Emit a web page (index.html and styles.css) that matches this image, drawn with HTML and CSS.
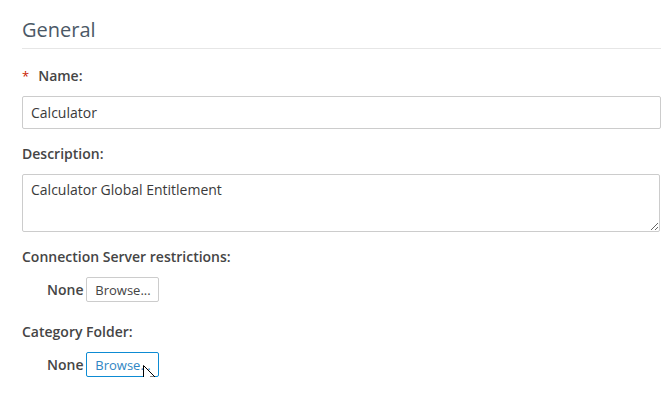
FILE: index.html
```html
<!DOCTYPE html>
<html>
<head>
<meta charset="utf-8">
<link rel="stylesheet" href="styles.css">
</head>
<body>
<div class="page">
  <h2 class="section-title">General</h2>
  <div class="group first">
    <div class="label"><span class="req">*</span>Name:</div>
    <input class="text-input" type="text" value="Calculator">
  </div>
  <div class="group">
    <div class="label">Description:</div>
    <textarea class="text-area">Calculator Global Entitlement</textarea>
  </div>
  <div class="group">
    <div class="label">Connection Server restrictions:</div>
    <div class="browse-row">
      <span class="none">None</span>
      <button class="btn">Browse...</button>
    </div>
  </div>
  <div class="group after-row">
    <div class="label">Category Folder:</div>
    <div class="browse-row">
      <span class="none">None</span>
      <span class="btn-wrap">
        <button class="btn focused">Browse...</button>
        <svg class="cursor" width="14" height="21" viewBox="0 0 14 21">
          <path d="M0.5 0.5 L0.5 16.5 L4.3 12.8 L7 19.5 L9.6 18.4 L7 12 L12 12 Z" fill="#fff" stroke="#000" stroke-width="1" stroke-linejoin="miter"/>
        </svg>
      </span>
    </div>
  </div>
</div>
</body>
</html>
```
FILE: styles.css
```css
* { box-sizing: border-box; }
html, body { margin: 0; padding: 0; background: #fff; }
body {
  font-family: "Open Sans", "Noto Sans", sans-serif;
  font-size: 14px;
  color: #3a3a3a;
}
.page {
  width: 661px;
  padding: 16px 0 0 22px;
  display: flex;
  flex-direction: column;
}
.section-title {
  margin: 0;
  font-size: 20px;
  line-height: 28px;
  font-weight: 400;
  color: #4b5866;
  padding-bottom: 4px;
  border-bottom: 1px solid #e6e6e6;
}
.group { display: flex; flex-direction: column; margin-top: 16px; }
.group.first { margin-top: 18px; }
.group.after-row { margin-top: 21px; }
.label {
  font-weight: 600;
  line-height: 18px;
  margin-bottom: 11px;
  color: #454545;
}
.req { color: #c92100; font-weight: 400; margin-right: 9px; font-size: 13px; }
.text-input {
  height: 33px;
  border: 1px solid #cccccc;
  border-radius: 2px;
  padding: 0 8px;
  font-family: inherit;
  font-size: 14px;
  color: #3a3a3a;
  width: 639px;
}
.text-area {
  height: 58px;
  border: 1px solid #cccccc;
  border-radius: 2px;
  padding: 5px 8px;
  font-family: inherit;
  font-size: 14px;
  line-height: 20px;
  color: #3a3a3a;
  width: 638px;
  resize: vertical;
}
.browse-row {
  display: flex;
  align-items: center;
  padding-left: 25px;
  gap: 3px;
}
.none { font-weight: 600; color: #454545; line-height: 18px; }
.btn-wrap { position: relative; display: inline-flex; }
.btn {
  height: 25px;
  width: 73px;
  padding: 0;
  background: #fff;
  border: 1px solid #cccccc;
  border-radius: 2px;
  font-family: inherit;
  font-size: 13px;
  color: #444;
}
.btn.focused { border-color: #0d8bd3; color: #2f86c4; }
.cursor { position: absolute; left: 57px; top: 13px; }
```
